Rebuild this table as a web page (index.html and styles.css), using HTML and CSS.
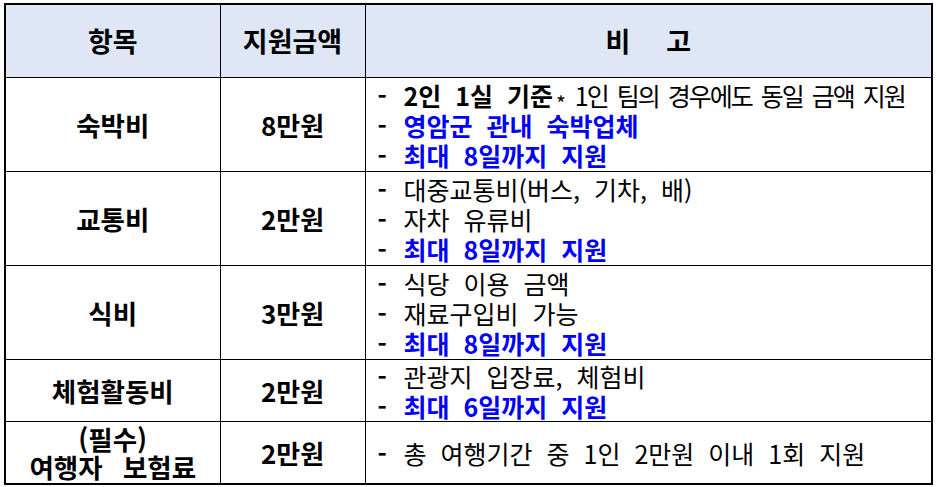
FILE: index.html
```html
<!DOCTYPE html>
<html lang="ko">
<head>
<meta charset="utf-8">
<link rel="stylesheet" href="styles.css">
</head>
<body>
<table class="tbl">
  <colgroup>
    <col class="c1"><col class="c2"><col class="c3">
  </colgroup>
  <thead>
    <tr class="head">
      <th>항목</th>
      <th>지원금액</th>
      <th><span class="wide">비</span>고</th>
    </tr>
  </thead>
  <tbody>
    <tr class="r3">
      <td class="name">숙박비</td>
      <td class="amt">8만원</td>
      <td class="note">
        <div class="ln"><span class="d">-</span><b>2인 1실 기준</b><span class="ast">*</span><span class="tight">1인 팀의 경우에도 동일 금액 지원</span></div>
        <div class="ln"><span class="d">-</span><span class="blue">영암군 관내 숙박업체</span></div>
        <div class="ln"><span class="d">-</span><span class="blue">최대 8일까지 지원</span></div>
      </td>
    </tr>
    <tr class="r3">
      <td class="name">교통비</td>
      <td class="amt">2만원</td>
      <td class="note">
        <div class="ln"><span class="d">-</span>대중교통비(버스, 기차, 배)</div>
        <div class="ln"><span class="d">-</span>자차 유류비</div>
        <div class="ln"><span class="d">-</span><span class="blue">최대 8일까지 지원</span></div>
      </td>
    </tr>
    <tr class="r3">
      <td class="name">식비</td>
      <td class="amt">3만원</td>
      <td class="note">
        <div class="ln"><span class="d">-</span>식당 이용 금액</div>
        <div class="ln"><span class="d">-</span>재료구입비 가능</div>
        <div class="ln"><span class="d">-</span><span class="blue">최대 8일까지 지원</span></div>
      </td>
    </tr>
    <tr class="r2">
      <td class="name">체험활동비</td>
      <td class="amt">2만원</td>
      <td class="note">
        <div class="ln"><span class="d">-</span>관광지 입장료, 체험비</div>
        <div class="ln"><span class="d">-</span><span class="blue">최대 6일까지 지원</span></div>
      </td>
    </tr>
    <tr class="r1">
      <td class="name two"><div class="nl">(필수)</div><div class="nl">여행자 보험료</div></td>
      <td class="amt">2만원</td>
      <td class="note">
        <div class="ln"><span class="d">-</span>총 여행기간 중 1인 2만원 이내 1회 지원</div>
      </td>
    </tr>
  </tbody>
</table>
</body>
</html>
```

FILE: styles.css
```css
html, body {
  margin: 0;
  padding: 0;
  background: #ffffff;
}
body {
  padding: 3px 0 0 4px;
  font-family: "Noto Sans CJK KR", "Noto Sans", sans-serif;
  color: #000;
}
.tbl {
  border-collapse: collapse;
  table-layout: fixed;
  width: 927px;
  border: 2px solid #000;
}
.c1 { width: 215px; }
.c2 { width: 145px; }
.c3 { width: 567px; }
.tbl th, .tbl td {
  border: 1px solid #000;
  padding: 0;
  vertical-align: middle;
}
.tbl .head th {
  height: 72px;
  background: #dfe6f6;
  font-size: 27px;
  font-weight: 700;
  text-align: center;
  line-height: 30px;
}
.wide { margin-right: 36px; }
.r3 td { height: 93px; }
.r2 td { height: 61px; }
.r1 td { height: 61px; }
.tbl .name {
  text-align: center;
  font-size: 26.5px;
  font-weight: 700;
  line-height: 28px;
}
.tbl .two { word-spacing: 13px; }
.nl {
  height: 28px;
  overflow: visible;
  white-space: nowrap;
}
.tbl .amt {
  text-align: center;
  font-size: 26px;
  font-weight: 700;
  line-height: 28px;
}
.tbl .note {
  padding: 0 0 0 12px;
  font-size: 25px;
  line-height: 30px;
  word-spacing: 7px;
}
.ln {
  height: 30px;
  overflow: visible;
  white-space: nowrap;
}
.d {
  display: inline-block;
  width: 26px;
  height: 30px;
  vertical-align: top;
  font-weight: 700;
}
.note b { font-weight: 700; }
.ast {
  display: inline-block;
  height: 30px;
  font-size: 21px;
  line-height: 30px;
  vertical-align: top;
  position: relative;
  top: 8px;
  margin: 0 9px 0 3px;
}
.tight {
  letter-spacing: -2px;
  word-spacing: 4px;
}
.blue { color: #0000ff; font-weight: 700; }
```
